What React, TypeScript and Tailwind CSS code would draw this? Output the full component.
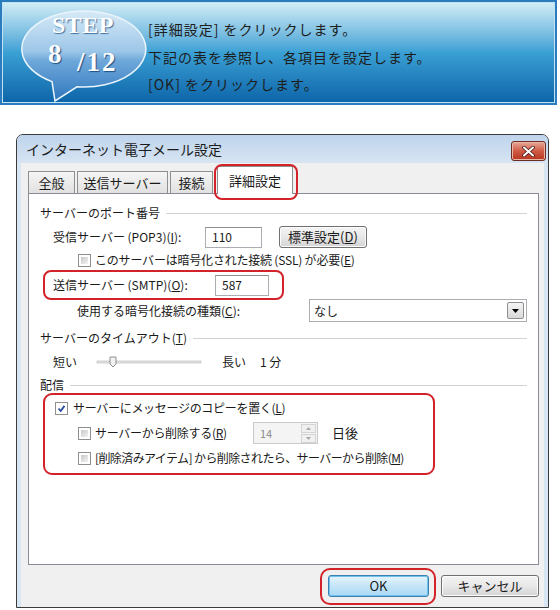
import React from "react";

function Check({ checked }: { checked?: boolean }) {
  return (
    <span className="w-[13px] h-[13px] border border-[#8e8f8f] bg-white p-[2px] flex shrink-0">
      {checked ? (
        <svg width="7" height="7" viewBox="0 0 7 7" className="m-auto">
          <path d="M0.5 3.5 L2.7 6 L6.5 0.8" fill="none" stroke="#2a4c9c" strokeWidth="1.8" />
        </svg>
      ) : (
        <span className="flex-1 bg-linear-to-br from-[#c9c9c9] to-[#f3f3f3]" />
      )}
    </span>
  );
}

function Group({ label, className = "" }: { label: React.ReactNode; className?: string }) {
  return (
    <div className={`flex items-center h-[16px] ${className}`}>
      <span className="whitespace-nowrap">{label}</span>
      <div className="flex-1 border-t border-[#d3d3d3] ml-[6px] mr-[11px]" />
    </div>
  );
}

function WinButton({ children, className = "" }: { children: React.ReactNode; className?: string }) {
  return (
    <div
      className={`h-[22px] border border-[#707070] rounded-[3px] bg-linear-to-b from-[#f4f4f4] via-[#e8e8e8] to-[#d4d4d4] flex items-center justify-center shadow-[inset_0_0_0_1px_#fcfcfc] ${className}`}
    >
      {children}
    </div>
  );
}

function TextBox({ value, className = "" }: { value: string; className?: string }) {
  return (
    <div className={`h-[21px] border border-[#abadb3] border-t-[#8e8f8f] bg-white flex items-center pl-[6px] ${className}`}>
      {value}
    </div>
  );
}

export default function App() {
  return (
    <div className="w-[560px] h-[610px] bg-white overflow-hidden font-['Noto_Sans_CJK_JP','Noto_Sans',sans-serif] text-[#1a1a1a]">
      {/* Banner */}
      <div className="w-[557px] h-[105px] border-2 border-[#2a7cbf] bg-linear-to-b from-[#d3eef6] via-[#3aa0d4] to-[#0b64a8] flex shadow-[inset_0_0_0_1px_#bfe3f3]">
        <div className="relative w-[146px] shrink-0">
          <svg width="146" height="103" viewBox="0 0 146 103" className="absolute left-0 top-0">
            <defs>
              <linearGradient id="bub" x1="0" y1="0" x2="0" y2="1">
                <stop offset="0" stopColor="#d6eaf7" />
                <stop offset="0.45" stopColor="#9cc6e8" />
                <stop offset="0.55" stopColor="#6fa8da" />
                <stop offset="1" stopColor="#2f76bd" />
              </linearGradient>
            </defs>
            <path
              d="M75 84.76 A62 38 0 1 0 50 79.6 L53 99 Z"
              fill="url(#bub)"
              stroke="#eaf4fb"
              strokeWidth="1.5"
            />
          </svg>
          <span className="absolute left-[50px] top-[11px] font-['Liberation_Serif',serif] font-bold text-[24px] leading-none text-white tracking-[0.5px] [text-shadow:1px_1px_1px_#3d6f9e]">
            STEP
          </span>
          <span className="absolute left-[46px] top-[39px] font-['Liberation_Serif',serif] font-bold text-[27px] leading-none text-white [text-shadow:1px_1px_1px_#1d4f85]">
            8
          </span>
          <span className="absolute left-[75px] top-[47px] font-['Liberation_Serif',serif] font-bold text-[27px] leading-none text-white tracking-[2px] [text-shadow:1px_1px_1px_#1d4f85]">
            /12
          </span>
        </div>
        <div className="pt-[14px] text-[14px] leading-[27.5px] tracking-[1px] text-[#1d1d1d]">
          <div>[詳細設定] をクリックします。</div>
          <div>下記の表を参照し、各項目を設定します。</div>
          <div>[OK] をクリックします。</div>
        </div>
      </div>

      {/* Dialog */}
      <div className="mt-[29px] ml-[16px] w-[533px] h-[474px] border border-[#3b3b3b] rounded-t-[7px] bg-[#d8e5f3] flex flex-col overflow-hidden text-[12px]">
        <div className="relative h-[28px] shrink-0 flex items-center pl-[9px] bg-linear-to-b from-[#bed4ec] to-[#d7e4f2]">
          <span className="text-[14px] text-[#1b1b1b]">インターネット電子メール設定</span>
          <div className="absolute right-[2px] top-[6px] w-[35px] h-[20px] rounded-[3px] border border-[#6e2b22] bg-linear-to-b from-[#e6a99a] via-[#cf5a44] to-[#b8341f] flex items-center justify-center shadow-[inset_0_0_0_1px_#eab6a8]">
            <svg width="13" height="11" viewBox="0 0 13 11">
              <path d="M2 1.5 L11 9.5 M11 1.5 L2 9.5" stroke="#4a1a14" strokeWidth="3.6" strokeLinecap="round" />
              <path d="M2 1.5 L11 9.5 M11 1.5 L2 9.5" stroke="#ffffff" strokeWidth="2" strokeLinecap="round" />
            </svg>
          </div>
        </div>

        <div className="flex-1 mx-[4px] bg-[#f0f0f0] pl-[7px] pr-[5px] pt-[3px] flex flex-col">
          {/* Tabs */}
          <div className="flex items-end h-[27px] text-[13px]">
            <div className="w-[47px] h-[22px] border border-b-0 border-[#8e8f8f] bg-linear-to-b from-[#f5f5f5] to-[#e1e1e1] flex items-center justify-center">
              全般
            </div>
            <div className="ml-[2px] w-[91px] h-[22px] border border-b-0 border-[#8e8f8f] bg-linear-to-b from-[#f5f5f5] to-[#e1e1e1] flex items-center justify-center">
              送信サーバー
            </div>
            <div className="ml-[2px] w-[43px] h-[22px] border border-b-0 border-[#8e8f8f] bg-linear-to-b from-[#f5f5f5] to-[#e1e1e1] flex items-center justify-center">
              接続
            </div>
            <div className="relative z-10 ml-[4px] mb-[-1px] w-[76px] h-[28px] border border-b-0 border-[#8e8f8f] bg-white flex items-center justify-center">
              詳細設定
              <div className="absolute -left-[4px] -top-[3px] w-[84px] h-[36px] border-2 border-[#d2232a] rounded-[8px]" />
            </div>
          </div>

          {/* Panel */}
          <div className="w-[511px] h-[372px] border border-[#898c95] bg-white pl-[11px] flex flex-col">
            <Group label="サーバーのポート番号" className="mt-[11px]" />

            <div className="mt-[5px] h-[22px] flex items-center">
              <span className="ml-[13px] w-[152px] whitespace-nowrap">
                受信サーバー (POP3)(<u>I</u>):
              </span>
              <TextBox value="110" className="w-[57px]" />
              <WinButton className="ml-[17px] w-[88px] text-[13px]">
                <span>
                  標準設定(<u>D</u>)
                </span>
              </WinButton>
            </div>

            <div className="mt-[4px] h-[16px] flex items-center">
              <span className="ml-[38px]">
                <Check />
              </span>
              <span className="ml-[4px] whitespace-nowrap tracking-[-0.2px]">
                このサーバーは暗号化された接続 (SSL) が必要(<u>E</u>)
              </span>
            </div>

            <div className="mt-[2px] ml-[3px] w-[241px] h-[30px] border-2 border-[#d2232a] rounded-[8px] flex items-center pl-[8px]">
              <span className="w-[162px] whitespace-nowrap">
                送信サーバー (SMTP)(<u>O</u>):
              </span>
              <TextBox value="587" className="w-[54px]" />
            </div>

            <div className="mt-[-1px] h-[23px] flex items-center">
              <span className="ml-[37px] w-[232px] whitespace-nowrap">
                使用する暗号化接続の種類(<u>C</u>):
              </span>
              <div className="w-[218px] h-[23px] border border-[#abadb3] bg-white flex items-center pl-[4px] pr-[2px]">
                <span className="flex-1">なし</span>
                <div className="w-[17px] h-[17px] border border-[#8e8f8f] rounded-[2px] bg-linear-to-b from-[#f4f4f4] to-[#d9d9d9] flex items-center justify-center">
                  <svg width="7" height="4" viewBox="0 0 7 4">
                    <path d="M0 0 L7 0 L3.5 4 Z" fill="#000" />
                  </svg>
                </div>
              </div>
            </div>

            <Group
              label={
                <>
                  サーバーのタイムアウト(<u>T</u>)
                </>
              }
              className="mt-[8px]"
            />

            <div className="mt-[6px] h-[20px] flex items-center">
              <span className="ml-[13px] w-[42px]">短い</span>
              <svg width="110" height="20" viewBox="0 0 110 20" className="shrink-0">
                <rect x="2" y="9" width="104" height="2" fill="#e6e6e6" stroke="#b5b5b5" strokeWidth="0.6" />
                <path d="M15 5 L21 5 L21 12 L18 15 L15 12 Z" fill="#f2f2f2" stroke="#8e8f8f" strokeWidth="1" />
              </svg>
              <span className="ml-[17px]">長い</span>
              <span className="ml-[14px]">1 分</span>
            </div>

            <Group label="配信" className="mt-[5px]" />

            <div className="ml-[3px] w-[392px] h-[82px] border-2 border-[#d2232a] rounded-[9px] flex flex-col">
              <div className="mt-[5px] h-[16px] flex items-center">
                <span className="ml-[10px]">
                  <Check checked />
                </span>
                <span className="ml-[5px] whitespace-nowrap tracking-[-0.3px]">
                  サーバーにメッセージのコピーを置く(<u>L</u>)
                </span>
              </div>
              <div className="mt-[6px] h-[22px] flex items-center">
                <span className="ml-[33px]">
                  <Check />
                </span>
                <span className="ml-[4px] w-[158px] whitespace-nowrap tracking-[-0.3px]">
                  サーバーから削除する(<u>R</u>)
                </span>
                <div className="w-[65px] h-[22px] border border-[#c9c9c9] bg-[#f4f4f4] flex items-center pl-[6px] pr-[1px] text-[#8a8a8a] text-[11px]">
                  <span className="flex-1">14</span>
                  <div className="flex flex-col gap-[1px]">
                    <div className="w-[15px] h-[9px] border border-[#d4d4d4] bg-[#f0f0f0] flex items-center justify-center">
                      <svg width="5" height="3" viewBox="0 0 5 3">
                        <path d="M0 3 L5 3 L2.5 0 Z" fill="#a8a8a8" />
                      </svg>
                    </div>
                    <div className="w-[15px] h-[9px] border border-[#d4d4d4] bg-[#f0f0f0] flex items-center justify-center">
                      <svg width="5" height="3" viewBox="0 0 5 3">
                        <path d="M0 0 L5 0 L2.5 3 Z" fill="#a8a8a8" />
                      </svg>
                    </div>
                  </div>
                </div>
                <span className="ml-[14px] text-[13px]">日後</span>
              </div>
              <div className="mt-[6px] h-[16px] flex items-center">
                <span className="ml-[33px]">
                  <Check />
                </span>
                <span className="ml-[4px] whitespace-nowrap tracking-[-0.6px]">
                  [削除済みアイテム] から削除されたら、サーバーから削除(<u>M</u>)
                </span>
              </div>
            </div>
          </div>

          {/* Footer */}
          <div className="w-[511px] mt-[3px] flex justify-end items-start">
            <div className="w-[116px] h-[37px] border-2 border-[#d2232a] rounded-[10px] pl-[6px] pt-[5px]">
              <div className="w-[101px] h-[22px] border border-[#3c7fb1] rounded-[3px] bg-linear-to-b from-[#e8f5fd] via-[#c4e5f8] to-[#a9d9f4] flex items-center justify-center shadow-[inset_0_0_0_1px_#6fc2ee] text-[13px]">
                OK
              </div>
            </div>
            <WinButton className="mt-[7px] ml-[5px] w-[98px] text-[13px]">キャンセル</WinButton>
          </div>
        </div>
      </div>
    </div>
  );
}
